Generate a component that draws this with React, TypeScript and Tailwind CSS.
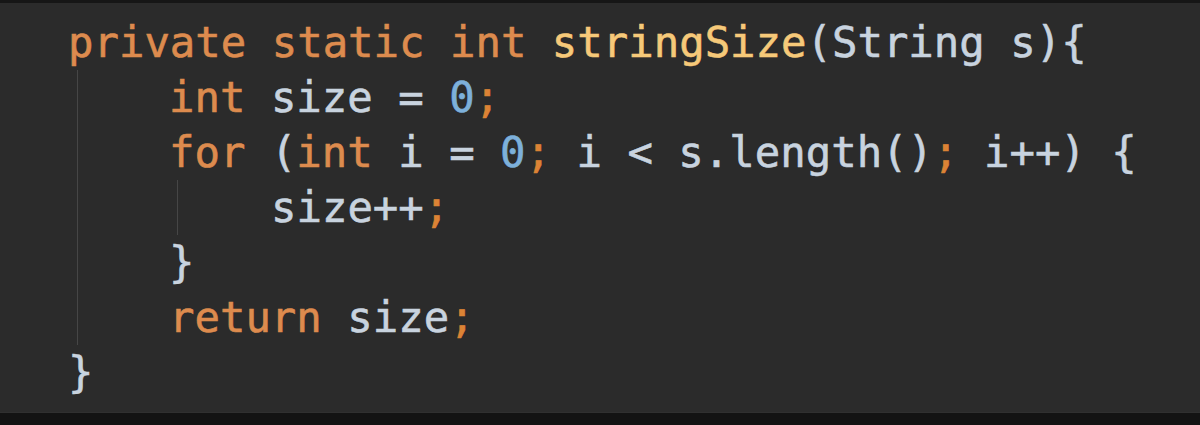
import React from "react";

const K = ({ children }: { children: React.ReactNode }) => <span className="text-[#dd8b4e]">{children}</span>;
const F = ({ children }: { children: React.ReactNode }) => <span className="text-[#f6c979]">{children}</span>;
const I = ({ children }: { children: React.ReactNode }) => <span className="text-[#c8d3df]">{children}</span>;
const N = ({ children }: { children: React.ReactNode }) => <span className="text-[#7db0da]">{children}</span>;
const S = () => <span className="text-[#dc8335]">;</span>;

export default function App() {
  return (
    <div className="w-[1200px] h-[425px] bg-[#131313] flex flex-col overflow-hidden">
      <div className="h-[3px] bg-[#161616]" />
      <div
        className="h-[410px] bg-[#2b2b2b] border-b border-[#303030] pl-[68px] pt-[12px] text-[42.3px] leading-[55px] whitespace-pre [-webkit-text-stroke:0.6px_currentColor]"
        style={{ fontFamily: '"DejaVu Sans Mono", "Liberation Mono", monospace' }}
      >
        <div>
          <K>private static int </K>
          <F>stringSize</F>
          <I>(String s){"{"}</I>
        </div>
        <div className="ml-[9px] border-l border-[#464646] pl-[91px]">
          <div>
            <K>int </K>
            <I>size = </I>
            <N>0</N>
            <S />
          </div>
          <div>
            <K>for </K>
            <I>(</I>
            <K>int </K>
            <I>i = </I>
            <N>0</N>
            <S />
            <I> i {"<"} s.length()</I>
            <S />
            <I> i++) {"{"}</I>
          </div>
          <div className="ml-[8px] border-l border-[#464646] pl-[93px]">
            <I>size++</I>
            <S />
          </div>
          <div>
            <I>{"}"}</I>
          </div>
          <div>
            <K>return </K>
            <I>size</I>
            <S />
          </div>
        </div>
        <div>
          <I>{"}"}</I>
        </div>
      </div>
      <div className="flex-1 bg-[#131313]" />
    </div>
  );
}
